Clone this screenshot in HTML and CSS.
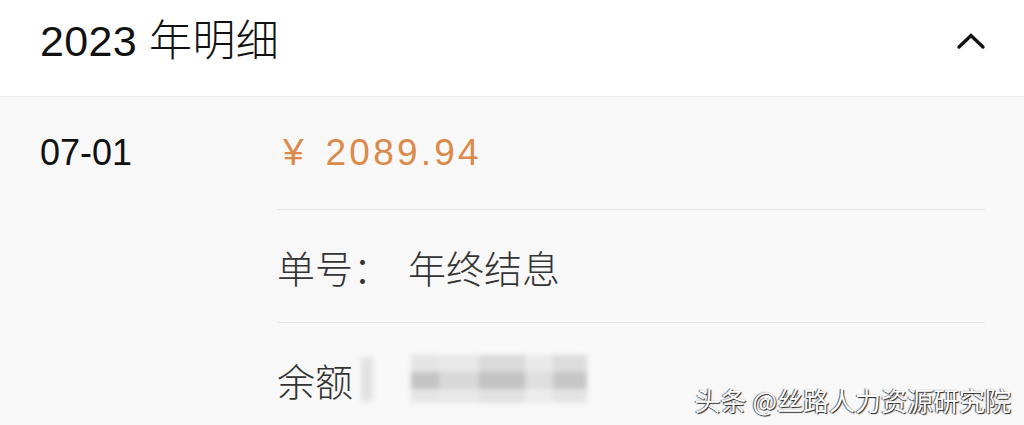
FILE: index.html
```html
<!DOCTYPE html>
<html lang="zh-CN">
<head>
<meta charset="utf-8">
<link rel="stylesheet" href="styles.css">
</head>
<body>
<div class="page">
  <header class="head">
    <div class="title">2023 年明细</div>
    <svg class="chev" width="30" height="18" viewBox="0 0 30 18"><polyline points="3,15 15,3.5 27,15" fill="none" stroke="#111" stroke-width="3.4" stroke-linecap="round" stroke-linejoin="miter"/></svg>
  </header>
  <section class="entry">
    <div class="date">07-01</div>
    <div class="details">
      <div class="row amount"><span class="yen">¥</span><span class="num">2089.94</span></div>
      <div class="row"><span class="label">单号：</span><span class="value">年终结息</span></div>
      <div class="row"><span class="label short">余额</span>
        <div class="blur">
          <span class="b b1"></span>
          <span class="grp">
            <span class="cell c1"></span><span class="cell c2"></span><span class="cell c3"></span><span class="cell c4"></span><span class="cell c5"></span>
          </span>
        </div>
      </div>
    </div>
  </section>
  <div class="wm">头条 @丝路人力资源研究院</div>
</div>
</body>
</html>
```
FILE: styles.css
```css
* { box-sizing: border-box; margin: 0; padding: 0; }
html, body { width: 1024px; height: 425px; overflow: hidden; }
body {
  background: #f8f8f8;
  font-family: "Liberation Sans", "Noto Sans CJK SC", sans-serif;
  color: #111;
}
.page { position: relative; width: 1024px; height: 425px; }
.head {
  height: 97px;
  background: #fff;
  border-bottom: 1px solid #ececec;
  display: flex;
  align-items: center;
  justify-content: space-between;
  padding: 0 38px 14px 40px;
}
.title { font-size: 43px; line-height: 1; letter-spacing: 0.3px; color: #111; }
.title, .label, .value { font-weight: 300; }
.chev { display: block; }
.entry { display: flex; padding-left: 40px; }
.date {
  width: 237px;
  height: 112px;
  display: flex;
  align-items: center;
  font-size: 36px;
  color: #111;
}
.details { width: 708px; display: flex; flex-direction: column; }
.row {
  height: 113px;
  display: flex;
  align-items: center;
  border-top: 1px solid #e6e6e6;
  font-size: 38px;
  color: #333;
}
.row.amount { height: 112px; border-top: none; color: #dc8a4b; font-size: 37px; }
.yen { margin-left: 6px; margin-right: 22px; }
.num { letter-spacing: 3.2px; }
.label { width: 131px; font-family: "Noto Sans CJK SC", sans-serif; }
.label.short { width: 84px; }
.value { font-family: "Noto Sans CJK SC", sans-serif; }
.blur { display: flex; align-items: center; height: 54px; filter: blur(2.5px); }
.b { display: block; }
.b1 { width: 12px; height: 44px; background: #e2e2e2; margin-right: 38px; }
.grp { display: flex; align-items: stretch; height: 48px; }
.cell { display: block; width: 35px; background: linear-gradient(#e6e6e6 0 35%, #cfcfcf 35% 70%, #e3e3e3 70%); }
.c1 { width: 28px; background: linear-gradient(#e4e4e4 0 35%, #c4c4c4 35% 70%, #e6e6e6 70%); }
.c2 { width: 40px; background: linear-gradient(#e8e8e8 0 35%, #d8d8d8 35% 70%, #e8e8e8 70%); }
.c3 { width: 46px; background: linear-gradient(#dadada 0 35%, #c2c2c2 35% 70%, #e2e2e2 70%); }
.c4 { width: 28px; background: linear-gradient(#e9e9e9 0 35%, #dedede 35% 70%, #ececec 70%); }
.c5 { width: 34px; background: linear-gradient(#dcdcdc 0 35%, #c6c6c6 35% 70%, #e4e4e4 70%); }
.wm {
  position: absolute;
  right: 13px;
  bottom: 10px;
  font-family: "Noto Sans CJK SC", sans-serif;
  font-size: 26px;
  line-height: 1.2;
  color: #fff;
  text-shadow: 1px 1px 1px #222, -1px 0 1px #555;
}
```
